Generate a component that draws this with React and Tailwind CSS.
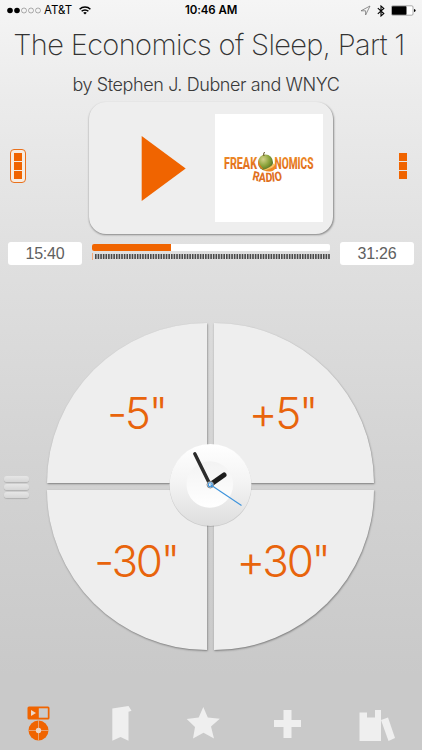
import { useState } from "react";

const ticks = Array.from({ length: 90 }, (_, i) => i);

const quadrants = [
  { label: '-5"', shape: "rounded-tl-[160px]", text: "pt-[20px] pl-[19px]" },
  { label: '+5"', shape: "rounded-tr-[160px]", text: "pt-[20px] pr-[23px]" },
  { label: '-30"', shape: "rounded-bl-[160px]", text: "pb-[18px] pl-[18px]" },
  { label: '+30"', shape: "rounded-br-[160px]", text: "pb-[18px] pr-[23px]" },
];

const StatusBar = () => {
  return (
    <div className="flex h-5 items-center pt-px text-[11.5px] leading-none text-black">
      <div className="flex flex-1 items-center pl-[7px]">
        <svg width="35" height="7" viewBox="0 0 35 7">
          <circle cx="3" cy="3.5" r="2.8" />
          <circle cx="10" cy="3.5" r="2.8" />
          <circle cx="17" cy="3.5" r="2.5" fill="none" stroke="#777" strokeWidth=".6" />
          <circle cx="24" cy="3.5" r="2.5" fill="none" stroke="#777" strokeWidth=".6" />
          <circle cx="31" cy="3.5" r="2.5" fill="none" stroke="#777" strokeWidth=".6" />
        </svg>
        <span className="ml-[2px] w-[29px] whitespace-nowrap">AT&amp;T</span>
        <svg className="ml-[6px]" width="12" height="9" viewBox="0 0 12 9" fill="none" stroke="#000" strokeWidth="1.5">
          <path d="M.6 3.3a7.6 7.6 0 0 1 10.8 0M2.6 5.3a4.8 4.8 0 0 1 6.8 0" />
          <path d="M6 8.6 4.2 6.8a2.6 2.6 0 0 1 3.6 0z" fill="#000" stroke="none" />
        </svg>
      </div>
      <span className="w-[53px] font-semibold tracking-[-0.1px] whitespace-nowrap">10:46 AM</span>
      <div className="flex flex-1 items-center justify-end pr-[6px]">
        <svg width="11" height="11" viewBox="0 0 11 11" fill="none" stroke="#777" strokeWidth=".8">
          <path d="M1 5.8 10 1 5.6 10V5.8z" />
        </svg>
        <svg className="ml-[6px]" width="8" height="12" viewBox="0 0 8 12" fill="none" stroke="#000" strokeWidth="1.1">
          <path d="M.8 3.2 6.8 8.6 4 11V1l2.8 2.4L.8 8.8" />
        </svg>
        <svg className="ml-[6px]" width="25" height="11" viewBox="0 0 25 11">
          <rect x=".5" y=".8" width="21.5" height="9.4" rx="1.2" fill="#fff" stroke="#777" strokeWidth=".6" />
          <rect x="1" y="1.3" width="14.5" height="8.4" rx=".6" />
          <path d="M23 4v3q1.6-.3 1.6-1.5T23 4z" />
        </svg>
      </div>
    </div>
  );
};

const Blocks = () => {
  return (
    <div className="flex flex-col gap-px">
      <div className="h-2 w-2 bg-[#f06400]" />
      <div className="h-2 w-2 bg-[#f06400]" />
      <div className="h-2 w-2 bg-[#f06400]" />
    </div>
  );
};

const Cover = () => {
  return (
    <svg className="bg-white" width="108" height="108" viewBox="0 0 108 108">
      <defs>
        <linearGradient id="logo" x1="0" y1="0" x2="0" y2="1">
          <stop offset="0" stopColor="#f0932b" />
          <stop offset="1" stopColor="#dd6117" />
        </linearGradient>
        <radialGradient id="apple" cx=".35" cy=".3" r=".8">
          <stop offset="0" stopColor="#d5d28a" />
          <stop offset=".5" stopColor="#8da53d" />
          <stop offset="1" stopColor="#44631d" />
        </radialGradient>
        <path id="smile" d="M37 66Q52 70 68.500 66" />
      </defs>
      <g fontFamily="Roboto, sans-serif" fontWeight="800" fill="url(#logo)">
        <text x="9" y="54.500" fontSize="17" textLength="33" lengthAdjust="spacingAndGlyphs">FREAK</text>
        <text x="59.500" y="54.500" fontSize="17" textLength="39" lengthAdjust="spacingAndGlyphs">NOMICS</text>
        <text fontSize="13" fill="#e0701f" textLength="31" lengthAdjust="spacingAndGlyphs">
          <textPath href="#smile">RADIO</textPath>
        </text>
      </g>
      <ellipse cx="50.500" cy="48.500" rx="7.500" ry="8" fill="url(#apple)" />
      <path d="M43.500 45q1 9 7 11-6-1-7.400-6z" fill="#e8781d" />
      <path d="M49 42q-1-2 .5-4" stroke="#5b4a1a" strokeWidth="1" fill="none" />
      <path d="M48 56q7 1 12.500-6 1.500 5-3 7-4.500 1.500-9.500-1z" fill="#f08a24" />
      <path d="M48 56q7 1 12.500-6l-2-.5q-3 4-10.500 6.500z" fill="#ffc15c" />
    </svg>
  );
};

const Player = ({ playing, onToggle }) => {
  return (
    <div className="mt-[4px] flex h-[132px] items-center">
      <div className="mb-[5px] ml-[10px] flex h-[34px] w-4 items-center justify-center rounded-[4px] border border-[#e9711c] bg-[#f6ece2]">
        <Blocks />
      </div>
      <div className="ml-[63px] flex h-[132px] w-[244px] items-center justify-between rounded-[17px] bg-[#eeeeee] pr-[10px] pl-[52px] shadow-[0.5px_1px_2px_rgba(0,0,0,0.4)]">
        <button onClick={onToggle} className="cursor-pointer" aria-pressed={playing}>
          <svg width="45" height="65" viewBox="0 0 45 65">
            <path d="M.7 0v65L44.700 32.500z" fill="#f06400" />
          </svg>
        </button>
        <Cover />
      </div>
      <div className="mb-[5px] ml-[66px]">
        <Blocks />
      </div>
    </div>
  );
};

const TimeBox = ({ time }) => {
  return (
    <div className="flex h-[23px] w-[74px] items-center justify-center rounded-[3px] bg-white pt-px font-['Liberation_Sans',sans-serif] text-[16px] leading-none tracking-[-0.2px] text-[#606060]">
      {time}
    </div>
  );
};

const Progress = () => {
  return (
    <div className="mt-[8px] flex h-[23px] items-start justify-between px-2">
      <TimeBox time="15:40" />
      <div className="w-[238px] pt-[2px]">
        <div className="h-[7px] overflow-hidden rounded-[2px] bg-white">
          <div className="h-full w-[79px] bg-[#f06400]" />
        </div>
        <svg className="mt-[2px] block" width="238" height="7" viewBox="0 0 238 7">
          <rect x="0" y="0" width="1" height="7" fill="#f3a878" />
          {ticks.map((i) => (
            <rect key={i} x={3 + i * 2.62} y="1" width="1.600" height="5" fill="#484848" />
          ))}
        </svg>
      </div>
      <TimeBox time="31:26" />
    </div>
  );
};

const Clock = () => {
  return (
    <svg className="absolute top-[119px] left-[120px]" width="86" height="88" viewBox="0 0 86 88">
      <defs>
        <linearGradient id="rim" x1="0" y1="0" x2="0" y2="1">
          <stop offset="0" stopColor="#fff" />
          <stop offset=".45" stopColor="#f4f4f4" />
          <stop offset="1" stopColor="#dedede" />
        </linearGradient>
        <linearGradient id="face" x1="0" y1="0" x2="0" y2="1">
          <stop offset="0" stopColor="#f3f3f3" />
          <stop offset="1" stopColor="#fff" />
        </linearGradient>
      </defs>
      <circle cx="43.500" cy="43.800" r="41.200" fill="#000" opacity=".14" />
      <circle cx="43.500" cy="43" r="41" fill="url(#rim)" />
      <circle cx="42.800" cy="42.500" r="23.300" fill="url(#face)" />
      <path d="M43.500 42.500 57 33" stroke="#1c1c1c" strokeWidth="5" strokeLinecap="round" />
      <path d="M43 42.500 27.800 11.800" stroke="#2b2b2b" strokeWidth="3.400" strokeLinecap="round" />
      <circle cx="43.300" cy="42.700" r="3.300" fill="#e8eef4" stroke="#777" strokeWidth=".8" />
      <circle cx="43.300" cy="42.700" r="2" fill="none" stroke="#3d93dc" strokeWidth="1.100" />
      <path d="M43.500 42.700 74.500 63.500" stroke="#3d93dc" strokeWidth="1.100" />
    </svg>
  );
};

const Wheel = ({ onSkip }) => {
  return (
    <div className="mt-[58px] flex h-[327px] items-center">
      <div className="mr-[18px] ml-1 flex w-[25px] flex-col gap-[2px]">
        <div className="h-[6px] rounded-[3px] bg-linear-to-b from-[#e6e6e6] to-[#d6d6d6] shadow-[0_1px_1px_rgba(0,0,0,0.16)]" />
        <div className="h-[6px] rounded-[3px] bg-linear-to-b from-[#e6e6e6] to-[#d6d6d6] shadow-[0_1px_1px_rgba(0,0,0,0.16)]" />
        <div className="h-[6px] rounded-[3px] bg-linear-to-b from-[#e6e6e6] to-[#d6d6d6] shadow-[0_1px_1px_rgba(0,0,0,0.16)]" />
      </div>
      <div className="relative grid grid-cols-[160px_160px] grid-rows-[160px_160px] gap-[7px]">
        {quadrants.map((q) => (
          <button
            key={q.label}
            onClick={() => onSkip(q.label)}
            className={`flex cursor-pointer items-center justify-center bg-[#eeeeee] text-[44px] leading-none font-light tracking-[-2.3px] text-[#e8640c] shadow-[0.5px_1px_2px_rgba(0,0,0,0.4)] ${q.shape} ${q.text}`}
          >
            {q.label}
          </button>
        ))}
        <Clock />
      </div>
    </div>
  );
};

const TabBar = () => {
  return (
    <div className="mt-auto flex h-[50px] items-start pl-[27px] text-[#efefef]">
      <svg className="mt-[6px]" width="23" height="36" viewBox="0 0 23 36">
        <rect x="0.500" y="0.500" width="22" height="13" rx="1.500" fill="#f06400" />
        <rect x="11.800" y="2.300" width="9" height="9.400" fill="#cbcbcb" />
        <path d="M4 4v6l5-3z" fill="#efd8c8" />
        <circle cx="11.500" cy="24.500" r="10" fill="#f06400" />
        <path d="M11.500 14v20.500M1.500 24.500h20.500" stroke="#e8b38c" strokeWidth=".8" />
        <circle cx="11.500" cy="24.500" r="2.700" fill="#e8d5c8" />
      </svg>
      <svg className="mt-[6px] ml-[62px]" width="20" height="36" viewBox="0 0 20 36" fill="currentColor">
        <path d="M.3 2.500 16.500 0l3 4.800-3 1v29l-8-3.800-8.200 3.800z" />
      </svg>
      <svg className="mt-[6px] ml-[54px]" width="34" height="36" viewBox="0 0 34 36" fill="currentColor">
        <path d="m17.300 1 4.500 10.500 12 1.300-8.800 7.700L28 32.500l-10.500-5.700L7 32.500 9 21 .7 13l12-1.500z" />
      </svg>
      <svg className="mt-[9px] ml-[53px]" width="28" height="30" viewBox="0 0 28 30" fill="currentColor">
        <path d="M10.500 1h8v10H28v7h-9.500v11h-8V18H1v-7h9.500z" />
      </svg>
      <svg className="mt-[9px] ml-[58px]" width="37" height="33" viewBox="0 0 37 33" fill="currentColor">
        <path d="M.5 3.500H8v5h8V1h6v31H.5z" />
        <path d="m22 11 7-2.500 7 20.500-6.500 3z" />
      </svg>
    </div>
  );
};

const App = () => {
  const [playing, setPlaying] = useState(false);
  const [, setLastSkip] = useState("");

  return (
    <div className="flex h-[750px] w-[422px] flex-col overflow-hidden bg-[linear-gradient(#f5f5f5,#ececec_12%,#dfdfdf_35%,#d3d3d3_62%,#c9c9c9_90%,#c9c9c9)] font-['Inter',sans-serif]">
      <StatusBar />
      <h1 className="mt-[4px] pr-[4px] text-center text-[29px] leading-[41px] font-[250] tracking-[-0.65px] whitespace-nowrap text-[#333]">
        The Economics of Sleep, Part 1
      </h1>
      <p className="mt-[7px] h-[26px] pr-[10px] text-center text-[18px] leading-[26px] font-light tracking-[-0.4px] whitespace-nowrap text-[#3a3a3a]">
        by Stephen J. Dubner and WNYC
      </p>
      <Player playing={playing} onToggle={() => setPlaying(!playing)} />
      <Progress />
      <Wheel onSkip={setLastSkip} />
      <TabBar />
    </div>
  );
};

export default App;
